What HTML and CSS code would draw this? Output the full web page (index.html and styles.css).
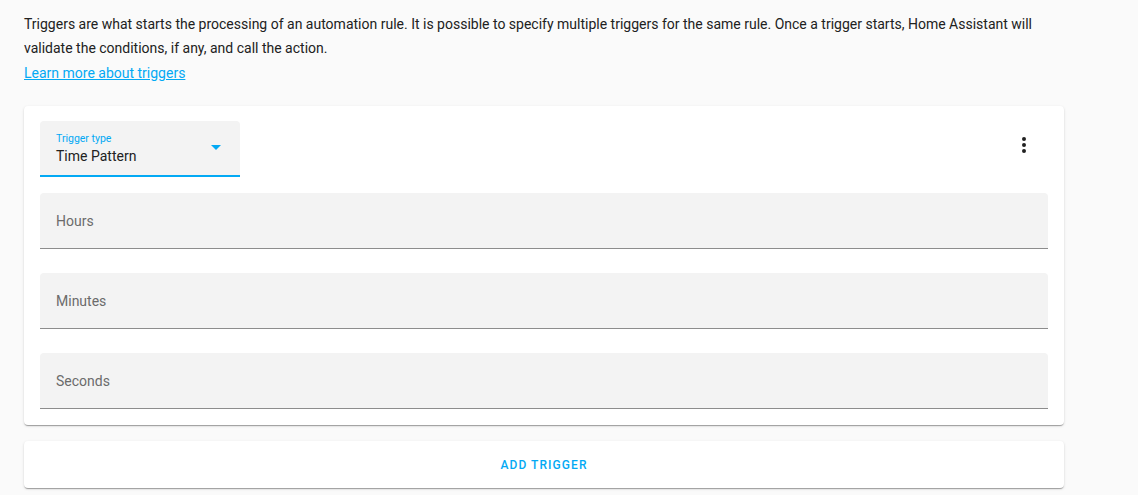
FILE: index.html
```html
<!DOCTYPE html>
<html>
<head>
<meta charset="utf-8">
<link rel="stylesheet" href="styles.css">
</head>
<body>
<div class="page">
  <p class="intro">Triggers are what starts the processing of an automation rule. It is possible to specify multiple triggers for the same rule. Once a trigger starts, Home Assistant will validate the conditions, if any, and call the action.</p>
  <a class="learn" href="#">Learn more about triggers</a>

  <div class="card trigger-card">
    <div class="card-head">
      <div class="select">
        <div class="select-text">
          <span class="select-label">Trigger type</span>
          <span class="select-value">Time Pattern</span>
        </div>
        <span class="arrow"></span>
      </div>
      <button class="menu-btn" aria-label="menu">
        <svg viewBox="0 0 24 24" width="24" height="24"><path fill="#212121" d="M12,16A2,2 0 0,1 14,18A2,2 0 0,1 12,20A2,2 0 0,1 10,18A2,2 0 0,1 12,16M12,10A2,2 0 0,1 14,12A2,2 0 0,1 12,14A2,2 0 0,1 10,12A2,2 0 0,1 12,10M12,4A2,2 0 0,1 14,6A2,2 0 0,1 12,8A2,2 0 0,1 10,6A2,2 0 0,1 12,4Z"/></svg>
      </button>
    </div>
    <div class="field first"><span class="field-label">Hours</span></div>
    <div class="field"><span class="field-label">Minutes</span></div>
    <div class="field"><span class="field-label">Seconds</span></div>
  </div>

  <div class="card add-card">
    <button class="add-btn">ADD TRIGGER</button>
  </div>
</div>
</body>
</html>
```

FILE: styles.css
```css
html, body {
  margin: 0;
  padding: 0;
  background: #fafafa;
  font-family: Roboto, "Noto Sans", sans-serif;
  color: #212121;
}
.page {
  padding: 12px 74px 20px 24px;
  display: flex;
  flex-direction: column;
  align-items: flex-start;
}
.intro {
  margin: 0;
  font-size: 14px;
  line-height: 24px;
  width: 1030px;
}
.learn {
  font-size: 14px;
  line-height: 24px;
  margin-top: 1px;
  color: #03a9f4;
  text-decoration: underline;
}
.card {
  width: 1040px;
  box-sizing: border-box;
  background: #fff;
  border-radius: 4px;
  box-shadow: 0 2px 1px -1px rgba(0,0,0,.2), 0 1px 1px 0 rgba(0,0,0,.14), 0 1px 3px 0 rgba(0,0,0,.12);
}
.trigger-card {
  margin-top: 21px;
  padding: 15px 16px 16px;
}
.card-head {
  display: flex;
  justify-content: space-between;
  align-items: flex-start;
}
.select {
  width: 200px;
  height: 56px;
  box-sizing: border-box;
  background: #f3f3f3;
  border-radius: 4px 4px 0 0;
  border-bottom: 2px solid #03a9f4;
  display: flex;
  align-items: center;
  justify-content: space-between;
  padding: 0 19px 0 16px;
}
.select-text {
  display: flex;
  flex-direction: column;
  padding-top: 1px;
}
.select-label {
  font-size: 10.5px;
  line-height: 14px;
  color: #03a9f4;
}
.select-value {
  font-size: 14px;
  line-height: 20px;
  color: #212121;
}
.arrow {
  width: 0;
  height: 0;
  border-left: 5px solid transparent;
  border-right: 5px solid transparent;
  border-top: 5px solid #03a9f4;
  margin-bottom: 2px;
}
.menu-btn {
  width: 48px;
  height: 48px;
  border: 0;
  background: transparent;
  padding: 0;
  display: flex;
  align-items: center;
  justify-content: center;
  margin-right: 0;
}
.field {
  height: 56px;
  box-sizing: border-box;
  background: #f3f3f3;
  border-radius: 4px 4px 0 0;
  border-bottom: 1px solid #8c8c8c;
  display: flex;
  align-items: center;
  padding: 0 16px;
  margin-top: 24px;
}
.field.first {
  margin-top: 16px;
}
.field-label {
  font-size: 14px;
  color: #6b6b6b;
  margin-top: 1px;
}
.add-card {
  margin-top: 16px;
  height: 47px;
  display: flex;
  align-items: center;
  justify-content: center;
}
.add-btn {
  border: 0;
  background: transparent;
  font-family: Roboto, sans-serif;
  font-size: 12px;
  font-weight: 500;
  letter-spacing: 1.07px;
  color: #03a9f4;
  padding: 0;
  margin-left: 0;
}
```
